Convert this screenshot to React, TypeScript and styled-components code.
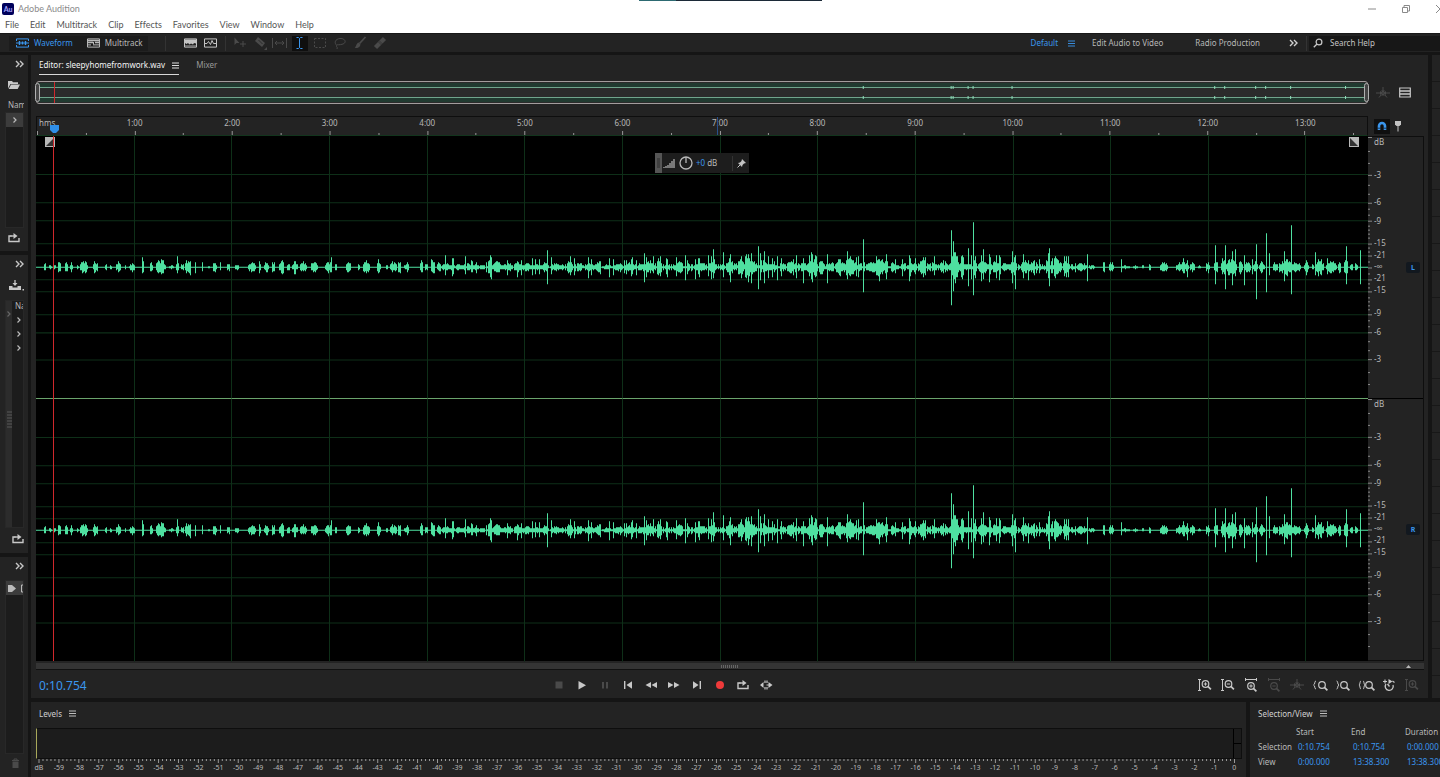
import React from "react";
import styled, { createGlobalStyle } from "styled-components";

const c = {
  panel: "#232323",
  inset: "#1c1c1c",
  gap: "#151515",
  line: "#0e0e0e",
  text: "#b8b8b8",
  dim: "#4a4a4a",
  blue: "#3a96ee",
  wave: "#4ee0a0",
  grid: "#0e2f18",
};

const Global = createGlobalStyle`
  *, *::before, *::after { box-sizing: border-box; }
  html, body { margin: 0; background: ${c.gap}; }
  body { font: 8px/12px "Noto Sans", sans-serif; font-variant-ligatures: none; color: ${c.text}; overflow-x: hidden; }
  button, input { font: inherit; font-variant-ligatures: none; color: inherit; background: none; border: 0; padding: 0; margin: 0; }
  svg { display: block; }
`;

const App_ = styled.div`
  display: flex;
  flex-direction: column;
  min-height: 100vh;
  overflow: hidden;
`;

/* ---------- window chrome ---------- */
const TitleBar = styled.header`
  position: relative;
  display: flex;
  align-items: center;
  height: 17px;
  padding-left: 2px;
  background: #fff;
  color: #8a8a8a;
  font: 9px/12px Lato, sans-serif;
`;
const Title = styled.h1`
  flex: 1;
  margin: 0;
  padding-left: 4px;
  font-size: 9px;
  font-weight: 400;
`;
const AppBadge = styled.span`
  width: 12px;
  height: 12px;
  border-radius: 2px;
  background: #00005b;
  color: #a9a9ff;
  font-size: 7px;
  font-weight: 700;
  text-align: center;
`;
const TopStrip = styled.span`
  position: absolute;
  top: 0;
  left: 44.4%;
  width: 183px;
  height: 1px;
  background: linear-gradient(90deg, #2d6a72 20%, #1c2a38 20%);
`;
const WindowButtons = styled.div`
  display: flex;
  gap: 22px;
  margin-right: -6px;
`;
const MenuBar = styled.nav`
  display: flex;
  align-items: center;
  gap: 11px;
  height: 16px;
  padding-left: 5px;
  background: #fff;
  color: #555;
  font: 9px/12px Lato, sans-serif;
`;
const MenuItem = styled.button`
  line-height: 14px;
`;

/* ---------- toolbar ---------- */
const Toolbar = styled.div`
  display: flex;
  align-items: center;
  height: 19px;
  background: ${c.panel};
  border-top: 1px solid #181818;
`;
const Modes = styled.div`
  display: flex;
  align-items: center;
  gap: 14px;
  height: 15px;
  margin-left: 9px;
  padding: 0 5px 0 7px;
  background: ${c.inset};
`;
const Mode = styled.button<{ $on?: boolean }>`
  display: flex;
  align-items: center;
  gap: 5px;
  color: ${(p) => (p.$on ? c.blue : c.text)};
`;
const Divider = styled.span<{ $gap?: number }>`
  width: 1px;
  height: 15px;
  margin: 0 ${(p) => p.$gap ?? 0}px;
  background: #333;
`;
const Tools = styled.div`
  display: flex;
  align-items: center;
  gap: 4px;
`;
const Tool = styled.button<{ $on?: boolean; $dim?: boolean }>`
  display: grid;
  place-items: center;
  width: 16px;
  height: 15px;
  background: ${(p) => (p.$on ? "#0f0f0f" : "none")};
  color: ${(p) => (p.$on ? c.blue : p.$dim ? c.dim : "#c4c4c4")};
`;
const Workspaces = styled.div`
  display: flex;
  align-items: center;
  margin-left: auto;
`;
const Workspace = styled.button<{ $on?: boolean; $after: number }>`
  display: flex;
  align-items: center;
  gap: 10px;
  margin-right: ${(p) => p.$after}px;
  color: ${(p) => (p.$on ? c.blue : c.text)};
`;
const MoreWorkspaces = styled.button`
  margin-right: 6px;
  color: #d0d0d0;
`;
const Search = styled.label`
  display: flex;
  align-items: center;
  gap: 7px;
  width: 131px;
  height: 15px;
  padding-left: 4px;
  background: #171717;
  color: #c8c8c8;
`;
const SearchInput = styled.input`
  width: 100px;
  outline: 0;
  &::placeholder { color: #c4c4c4; opacity: 1; }
`;

/* ---------- docking ---------- */
const Dock = styled.main`
  flex: 1;
  display: flex;
  gap: 3px;
  padding-top: 3px;
  background: ${c.gap};
`;
const SideRail = styled.aside`
  display: flex;
  flex-direction: column;
  gap: 4px;
  width: 28px;
`;
const SidePanel = styled.section<{ $h?: number }>`
  display: flex;
  flex-direction: column;
  flex: ${(p) => (p.$h ? `0 0 ${p.$h}px` : "1")};
  padding: 3px 4px 5px 5px;
  background: ${c.panel};
  overflow: hidden;
`;
const RailButton = styled.button<{ $dim?: boolean; $h?: number; $end?: number }>`
  display: flex;
  flex: none;
  align-items: center;
  justify-content: flex-end;
  height: ${(p) => p.$h ?? 12}px;
  padding-right: ${(p) => p.$end ?? 0}px;
  color: ${(p) => (p.$dim ? c.dim : "#c8c8c8")};
`;
const RailList = styled.div<{ $top?: number }>`
  flex: 1;
  display: flex;
  margin-top: ${(p) => p.$top ?? 0}px;
  overflow: hidden;
  background: ${c.inset};
  border: 1px solid #282828;
`;
const RailGrip = styled.div`
  display: flex;
  flex-direction: column;
  align-items: center;
  justify-content: space-between;
  width: 6px;
  padding: 9px 0 98px;
  background: #2c2c2c;
  color: #666;
`;
const RailRows = styled.div`
  flex: 1;
  display: flex;
  flex-direction: column;
  align-items: flex-end;
  white-space: nowrap;
`;
const RailRow = styled.span<{ $on?: boolean }>`
  display: flex;
  flex: none;
  align-items: center;
  justify-content: center;
  width: 100%;
  height: 14px;
  background: ${(p) => (p.$on ? "#3c3c3c" : "none")};
  color: #bbb;
  overflow: hidden;
`;
const RailHead = styled.span`
  height: 12px;
  padding-left: 3px;
  line-height: 10px;
  white-space: nowrap;
  overflow: hidden;
`;
const Work = styled.div`
  flex: 1;
  min-width: 0;
  display: flex;
  flex-direction: column;
  gap: 4px;
`;
const Upper = styled.div`
  flex: 1;
  display: flex;
  gap: 4px;
`;
const Sliver = styled.aside`
  width: 8px;
  background: repeating-linear-gradient(${c.panel} 0 26px, #181818 26px 27px);
`;
const Lower = styled.div`
  display: flex;
  gap: 4px;
  height: 75px;
`;

/* ---------- editor ---------- */
const Editor = styled.section`
  flex: 1;
  min-width: 0;
  display: flex;
  flex-direction: column;
  padding: 0 4px 0 5px;
  background: ${c.panel};
`;
const Tabs = styled.div`
  display: flex;
  align-items: center;
  gap: 17px;
  height: 21px;
  margin-bottom: 5px;
  padding-left: 3px;
`;
const Tab = styled.button<{ $on?: boolean }>`
  display: flex;
  align-items: center;
  gap: 7px;
  height: 18px;
  color: ${(p) => (p.$on ? "#f4f4f4" : "#999")};
  border-bottom: 1px solid ${(p) => (p.$on ? "#d8d8d8" : "transparent")};
`;
const Split = styled.div<{ $mb?: number; $grow?: boolean }>`
  display: grid;
  grid-template-columns: minmax(0, 1fr) 56px;
  flex: ${(p) => (p.$grow ? "1" : "none")};
  margin-bottom: ${(p) => p.$mb ?? 0}px;
`;
const Overview = styled.div`
  position: relative;
  height: 23px;
  border: 1px solid #a39d9d;
  border-radius: 3px;
  background: #2b2b2b;
`;
const Handle = styled.span<{ $side: "left" | "right" }>`
  position: absolute;
  top: 1px;
  bottom: 1px;
  ${(p) => p.$side}: -2px;
  width: 5px;
  border: 1px solid #b0b0b0;
  border-radius: 3px;
  background: #444;
`;
const SideIcons = styled.div<{ $gap: number }>`
  display: flex;
  align-items: center;
  gap: ${(p) => p.$gap}px;
  padding-left: 6px;
`;
const Ruler = styled.div`
  position: relative;
  display: flex;
  flex-direction: column;
  justify-content: space-between;
  height: 20px;
  border: 1px solid ${c.line};
  border-bottom-color: #12351d;
`;
const RulerLabels = styled.div`
  display: flex;
`;
const RulerLabel = styled.span<{ $span: number; $start?: boolean }>`
  flex: ${(p) => p.$span} 1 0;
  min-width: 0;
  text-indent: ${(p) => (p.$start ? 2 : 0)}px;
  text-align: ${(p) => (p.$start ? "left" : "center")};
`;
const Stretch = styled.svg`
  width: 100%;
  height: 100%;
`;
const RulerTicks = styled.svg`
  width: 100%;
  height: 5px;
`;
const HeadMark = styled.svg`
  position: absolute;
  left: 1%;
  bottom: 1px;
  width: 9px;
  height: 9px;
`;
const HeadLine = styled.span`
  position: absolute;
  z-index: 1;
  top: 0;
  bottom: 0;
  left: 1.28%;
  width: 1px;
  background: #d0282c;
`;
const HoverLine = styled.span`
  position: absolute;
  top: 0;
  bottom: 0;
  left: 51.1%;
  width: 1px;
  background: #28508a;
`;
const Lanes = styled.div`
  position: relative;
  display: flex;
  flex-direction: column;
  background: #000;
`;
const Lane = styled.div`
  flex: 1 1 0;
  min-height: 180px;
  & + & { border-top: 1px solid #6aa46c; }
  svg { position: absolute; width: 100%; height: 50%; }
`;
const Corner = styled.svg<{ $side: "left" | "right" }>`
  position: absolute;
  top: 1px;
  ${(p) => p.$side}: 9px;
  width: 10px;
  height: 10px;
`;
const Hud = styled.div`
  position: absolute;
  top: 17px;
  left: 50%;
  transform: translateX(-50%);
  display: flex;
  align-items: center;
  width: 94px;
  height: 20px;
  background: #1d1d1d;
`;
const HudGrip = styled.span`
  display: grid;
  place-items: center;
  width: 7px;
  height: 20px;
  margin-right: 1px;
  background: #555;
`;
const HudGain = styled.span`
  display: flex;
  gap: 2px;
  flex: 1;
  padding-left: 2px;
`;
const Blue = styled.button`
  color: ${c.blue};
`;
const Scales = styled.div`
  display: flex;
  flex-direction: column;
  border: 1px solid ${c.line};
  border-left: 0;
`;
const Scale = styled.div`
  flex: 1 1 0;
  min-height: 0;
  display: grid;
  grid-template-columns: 5px 1fr 17px;
  grid-template-rows: minmax(0, 1fr);
  align-items: center;
  & + & { border-top: 1px solid #000; }
`;
const rowHeights = [11, 33, 27, 19, 22, 12, 12, 12, 12, 23, 19, 27, 33];
const ScaleLabels = styled.div`
  display: grid;
  height: 100%;
  grid-template-rows: ${rowHeights.map((h) => `minmax(0, ${h}fr)`).join(" ")};
  align-items: end;
  line-height: 12px;
  span { height: 12px; padding-left: 1px; }
`;
const Channel = styled.button`
  display: grid;
  place-items: center;
  width: 14px;
  height: 11px;
  border-radius: 2px;
  background: #12181f;
  color: ${c.blue};
  font-size: 7px;
  font-weight: 700;
  line-height: 11px;
`;
const ScrollTrack = styled.div`
  display: grid;
  grid-template-columns: 1fr 18px 1fr;
  align-items: center;
  height: 7px;
  margin-top: 2px;
  background: #343434;
  border-bottom: 1px solid #111;
  svg { justify-self: end; margin-right: 13px; }
`;
const Grip = styled.span`
  grid-column: 2;
  height: 3px;
  background: repeating-linear-gradient(90deg, #666 0 1px, transparent 1px 2px);
`;
const Transport = styled.div`
  display: flex;
  align-items: center;
  justify-content: space-between;
  height: 28px;
  padding: 1px 3px 0 3px;
`;
const Clock = styled.button`
  min-width: 90px;
  padding-top: 2px;
  color: ${c.blue};
  font-size: 12px;
  line-height: 16px;
  text-align: left;
`;
const ButtonRow = styled.div`
  display: flex;
  gap: 5px;
`;
const IconButton = styled.button<{ $dim?: boolean }>`
  display: grid;
  place-items: center;
  width: 18px;
  height: 18px;
  color: ${(p) => (p.$dim ? c.dim : "#c8c8c8")};
`;

/* ---------- lower panels ---------- */
const Levels = styled.section`
  flex: 1;
  min-width: 0;
  padding: 5px 4px 0 5px;
  background: ${c.panel};
  overflow: hidden;
`;
const PanelTitle = styled.h2`
  display: flex;
  align-items: center;
  gap: 7px;
  height: 13px;
  margin: 0 0 8px;
  padding-left: 3px;
  color: #d0d0d0;
  font-size: 8px;
  font-weight: 400;
`;
const Meter = styled.div`
  display: flex;
  justify-content: space-between;
  height: 31px;
  background: ${c.inset};
  border: 1px solid ${c.line};
  border-left: 1px solid #a8a85a;
`;
const Clip = styled.span`
  width: 8px;
  border-left: 1px solid #000;
  background: linear-gradient(transparent 14px, #000 14px 15px, transparent 15px);
`;
const MeterTicks = styled.svg`
  width: 100%;
  height: 4px;
`;
const MeterLabels = styled.div`
  display: flex;
  margin: 0 -2px 0 -7px;
  font-size: 7px;
  line-height: 10px;
  span { flex: 1 1 0; min-width: 0; text-align: center; }
`;
const Selection = styled.section`
  width: 190px;
  padding: 5px 0 0 5px;
  background: ${c.panel};
  overflow: hidden;
`;
const Times = styled.table`
  width: 188px;
  margin-top: -4px;
  border-spacing: 0;
  table-layout: fixed;
  th, td {
    height: 15px;
    padding: 0 0 0 3px;
    font-weight: 400;
    text-align: left;
    white-space: nowrap;
  }
  thead th:not(:first-child) { padding-left: 1px; }
`;

/* ---------- icons ---------- */
type IconProps = { children: React.ReactNode; w?: number; h?: number };
const Icon = ({ children, w = 14, h = 14 }: IconProps) => (
  <svg width={w} height={h} viewBox={`0 0 ${w} ${h}`} fill="none" stroke="currentColor" aria-hidden="true">
    {children}
  </svg>
);
const solid = { fill: "currentColor", stroke: "none" };

const Burger = () => (
  <Icon w={7} h={7}><path d="M0 1h7M0 3.500h7M0 6h7" strokeWidth=".9" /></Icon>
);
const Chevrons = () => (
  <Icon w={9} h={8}><path d="M1 1l3 3-3 3M5 1l3 3-3 3" strokeWidth="1.4" /></Icon>
);
const Chevron = () => (
  <Icon w={6} h={8}><path d="M1.500 1.500l2.500 2.500-2.500 2.500" strokeWidth="1.200" /></Icon>
);
const WaveIcon = () => (
  <Icon w={13} h={10}>
    <path d="M.5 3V.9h12V3M.5 7v2.100h12V7M0 5h13" />
    <path d="M3.500 3v4M6.500 3.500v3M9.500 3v4" strokeWidth="1.400" />
  </Icon>
);
const TracksIcon = () => (
  <Icon w={13} h={10}>
    <path d="M.5.9h12v8.200H.5z" />
    <path d="M1 2.500h11M1 4.500h5M8 4.500h4" strokeWidth="1.300" />
    <path d="M1 6.900h3M6 6.900h6M6.500 4v2.500" />
  </Icon>
);
const SpectralIcon = () => (
  <Icon w={13} h={10}>
    <path d="M.5.9h12v8.200H.5z" />
    <path d="M1 1.500h11v4l-2-.5-1 1.500-2-1-1.500 1L4 5 2.500 6 1 5z" {...solid} />
    <path d="M1 7.800h11" strokeWidth=".6" />
  </Icon>
);
const PitchIcon = () => (
  <Icon w={13} h={10}>
    <path d="M.5.9h12v8.200H.5z" /><path d="M1 5.500h2l1.500-2 2 3 1.500-4 1.500 3H12" />
  </Icon>
);
const MoveIcon = () => (
  <Icon><path d="M1.500 1.500v7.500l2-2h3z" {...solid} /><path d="M7 8h6M10 5v6" /></Icon>
);
const RazorIcon = () => (
  <Icon><path d="M5 1l7 6-3 4-7-6z" {...solid} /><path d="M5.500 4l4 4" stroke="#232323" strokeWidth=".8" /><path d="M14 11v3h-3z" {...solid} /></Icon>
);
const SlipIcon = () => (
  <Icon w={15}><path d="M.5 2v10M14.500 2v10M3 7h9M5 5L3 7l2 2M10 5l2 2-2 2" /></Icon>
);
const IBeamIcon = () => (
  <Icon w={9}><path d="M1.500 1.500h2l1 1 1-1h2M1.500 12.500h2l1-1 1 1h2M4.500 2.500v9" /></Icon>
);
const MarqueeIcon = () => (
  <Icon><path d="M1.500 2.500h11v9h-11z" strokeDasharray="2 1.500" /></Icon>
);
const LassoIcon = () => (
  <Icon><path d="M3.500 9C1 7 2 3 7 2.500s7 4 3 5.500-6 0-6.500 1.500S5 11 4 13" /></Icon>
);
const BrushIcon = () => (
  <Icon><path d="M12.500 1L6.500 7.500" strokeWidth="1.800" /><path d="M7.500 8.500c-.5 3-3.500 4-6 3.500 1.500-.5 1.500-4.500 4-5.500z" {...solid} /></Icon>
);
const HealIcon = () => (
  <Icon><path d="M2.500 11.500l9-9" strokeWidth="4.500" /><path d="M5.500 6l3 3M6.500 5l3 3" stroke="#232323" strokeWidth=".6" /></Icon>
);
const SearchIcon = () => (
  <Icon w={10} h={10}><circle cx="6" cy="4" r="2.900" strokeWidth="1.200" /><path d="M4 6L.8 9.200" strokeWidth="1.300" /></Icon>
);
const FolderIcon = () => (
  <Icon w={12} h={10}>
    <path d="M0 1h4l1 1.200h5V4H2.500L0 8.500z" {...solid} /><path d="M3 4.600h9L9.700 9H.7z" {...solid} />
  </Icon>
);
const LoopIcon = () => (
  <Icon w={12} h={11}>
    <path d="M3.500 4H1v5.500h10V6" strokeWidth="1.400" /><path d="M2.500 4H7" strokeWidth="1.400" /><path d="M5.500 1l4 3-4 3z" {...solid} />
  </Icon>
);
const ImportIcon = () => (
  <Icon w={15} h={11}>
    <path d="M0 6h3.500v1.500h5V6H12v4H0z" {...solid} /><path d="M6 0v4" strokeWidth="1.300" />
    <path d="M3.500 3h5L6 6zM13.500 9h1.500v1.500h-1.500z" {...solid} />
  </Icon>
);
const TrashIcon = () => (
  <Icon w={9} h={10}><path d="M1 2.500h7M3 2V1h3v1" /><path d="M1.500 3.500h6V10h-6z" {...solid} /></Icon>
);
const SnapStarIcon = () => (
  <Icon>
    <path d="M0 7h4M10 7h4M7 1v4M5.300 8.700L3 11.500M8.700 8.700L11 11.500" />
    <path d="M4 5l3 2-3 2zM10 5L7 7l3 2zM5 4.500h4L7 7zM5 9.500h4L7 7z" {...solid} />
  </Icon>
);
const ListIcon = () => (
  <Icon w={12} h={11}><path d="M.7 1h10.600v9H.7z" strokeWidth="1.200" /><path d="M1 4h10M1 7h10" strokeWidth="1.400" /></Icon>
);
const MagnetIcon = () => (
  <Icon w={10} h={10}>
    <path d="M2 9V5a3 3 0 016 0v4" strokeWidth="2.600" /><path d="M.5 7.200h3M6.500 7.200h3" stroke="#111" strokeWidth=".7" />
  </Icon>
);
const MarkerIcon = () => (
  <Icon w={8} h={12}><path d="M1 1h6v3.500L5.500 6h-3L1 4.500z" {...solid} /><path d="M4 5v6.500" /></Icon>
);
const PinIcon = () => (
  <Icon w={9} h={9}><path d="M5 0l4 4-2 .5-1.500 1.500L5 8 1 4l2-.5L4.500 2z" {...solid} /><path d="M3.500 5.500L.5 8.500" /></Icon>
);

const Lens = ({ x, sign }: { x: number; sign?: "+" | "-" }) => (
  <>
    <circle cx={x} cy="6" r="3.300" strokeWidth="1.200" />
    <path d={`M${x + 2.400} 8.400l3 3`} strokeWidth="1.700" />
    {sign && <path d={`M${x - 1.700} 6h3.400`} />}
    {sign === "+" && <path d={`M${x} 4.300v3.400`} />}
  </>
);
const VBracket = () => <path d="M0 1.500h3M0 12.500h3M1.500 1.500v11" />;
const HBracket = () => <path d="M1 1.500h12M1.500 0v3M12.500 0v3" />;

const transport: [string, React.ReactNode, boolean?][] = [
  ["Stop", <Icon><path d="M3.500 3.500h7v7h-7z" {...solid} /></Icon>, true],
  ["Play", <Icon><path d="M3.500 3v8.500L11 7.200z" {...solid} /></Icon>],
  ["Pause", <Icon><path d="M4 4v6.500h2V4zM8 4v6.500h2V4z" {...solid} /></Icon>, true],
  ["Go to start", <Icon><path d="M3 3h1.400v8H3zM11 3.200v7.600L5.500 7z" {...solid} /></Icon>],
  ["Rewind", <Icon><path d="M7 4v6L1.500 7zM13 4v6L7.500 7z" {...solid} /></Icon>],
  ["Fast forward", <Icon><path d="M1 4v6l5.500-3zM7 4v6l5.500-3z" {...solid} /></Icon>],
  ["Go to end", <Icon><path d="M9.600 3H11v8H9.600zM3 3.200v7.600L8.500 7z" {...solid} /></Icon>],
  ["Record", <Icon><circle cx="7" cy="7" r="4" fill="#ee3a3a" stroke="none" /></Icon>],
  ["Loop playback", <LoopIcon />],
  ["Skip selection", (
    <Icon>
      <path d="M4.500 4v6L1 7zM9.500 4l4 3-4 3z" {...solid} />
      <path d="M6 2.500v2.500M6 9v2.500M8 2.500v2.500M8 9v2.500M7.500 7h3" strokeWidth="1.200" />
    </Icon>
  )],
];
const zooms: [string, React.ReactNode, boolean?][] = [
  ["Zoom in amplitude", <Icon><VBracket /><Lens x={7.500} sign="+" /></Icon>],
  ["Zoom out amplitude", <Icon><VBracket /><Lens x={7.500} sign="-" /></Icon>],
  ["Zoom in time", <Icon><HBracket /><g transform="translate(0 2)"><Lens x={7} sign="+" /></g></Icon>],
  ["Zoom out time", <Icon><HBracket /><g transform="translate(0 2)"><Lens x={7} sign="-" /></g></Icon>, true],
  ["Zoom out full", <SnapStarIcon />, true],
  ["Zoom to in point", <Icon w={16}><path d="M4 3C2 3 3.500 6.500 1.500 7 3.500 7.500 2 11 4 11" /><g transform="translate(0 1)"><Lens x={10} /></g></Icon>],
  ["Zoom to out point", <Icon w={16}><path d="M1.500 3c2 0 .5 3.500 2.500 4-2 .5-.5 4-2.500 4" /><g transform="translate(0 1)"><Lens x={9} /></g></Icon>],
  ["Zoom to selection", <Icon w={17}><path d="M3 3C1.500 3 2.500 6.500 1 7c1.500.5.5 4 2 4M5 3c1.500 0 .5 3.500 2 4-1.500.5-.5 4-2 4" /><g transform="translate(0 1)"><Lens x={11} /></g></Icon>],
  ["Zoom reset", <Icon><path d="M4 6a4 4 0 107 1M7.500 8.500L5.500 6" strokeWidth="1.300" /><path d="M1 3.500h4M3 1.500v4M10.500 3l2 1.500" strokeWidth="1.100" /><path d="M6.500 1l4 2.500-4 2.500z" {...solid} /></Icon>],
  ["Zoom track height", <Icon><VBracket /><Lens x={7.500} sign="+" /></Icon>, true],
];

/* ---------- waveform ---------- */
// Silence between phrases is left flat; each burst is [start, end, peak].
const bursts: number[][] = [
  [8, 9, 6], [13, 15, 2], [18, 19, 3], [22, 24, 7], [29, 31, 6], [34, 36, 6], [41, 42, 2], [44, 51, 6], [57, 61, 6], [69, 70, 3],
  [74, 75, 2], [80, 84, 6], [89, 89, 3], [93, 98, 4], [106, 107, 8], [114, 116, 5], [120, 129, 8], [133, 137, 2], [140, 142, 6],
  [145, 147, 4], [149, 154, 8], [159, 159, 5], [166, 166, 5], [172, 173, 2], [177, 180, 6], [184, 184, 5], [191, 193, 4],
  [199, 202, 3], [212, 219, 5], [223, 224, 6], [228, 232, 5], [236, 238, 6], [243, 247, 7], [251, 253, 4], [256, 261, 6],
  [264, 270, 6], [275, 281, 6], [289, 295, 6], [299, 300, 4], [310, 314, 6], [322, 323, 4], [327, 333, 7], [341, 344, 6],
  [350, 351, 4], [354, 360, 6], [362, 364, 6], [368, 372, 5], [384, 386, 6], [389, 391, 4], [395, 398, 7], [401, 404, 5],
  [404, 426, 6], [427, 448, 5], [450, 476, 8], [478, 505, 6], [506, 512, 6], [514, 536, 8], [537, 564, 7], [566, 576, 3],
  [576, 602, 7], [603, 624, 9], [625, 662, 7], [663, 690, 8], [690, 714, 10], [714, 730, 12], [730, 759, 7], [759, 777, 11],
  [778, 798, 9], [799, 808, 8], [809, 819, 11], [820, 838, 8], [839, 848, 9], [849, 868, 6], [869, 898, 9], [899, 913, 10],
  [914, 922, 15], [923, 946, 9], [946, 964, 10], [965, 974, 5], [974, 980, 10], [982, 1009, 9], [1010, 1024, 13],
  [1025, 1039, 9], [1040, 1051, 5], [1053, 1058, 3], [1067, 1068, 5], [1073, 1077, 6], [1086, 1093, 2], [1097, 1101, 2],
  [1106, 1107, 2], [1113, 1114, 3], [1124, 1131, 5], [1140, 1152, 5], [1154, 1158, 5], [1162, 1164, 2], [1170, 1173, 5],
  [1178, 1181, 6], [1185, 1189, 10], [1190, 1200, 8], [1203, 1206, 8], [1208, 1214, 7], [1217, 1221, 6], [1223, 1228, 6],
  [1237, 1241, 5], [1243, 1247, 6], [1248, 1254, 9], [1256, 1264, 5], [1268, 1272, 6], [1276, 1277, 3], [1280, 1287, 8],
  [1290, 1300, 6], [1302, 1304, 5], [1308, 1311, 8], [1314, 1316, 3], [1319, 1321, 5],
];
// Isolated transients: [x, above, below].
const spikes: number[][] = [
  [106, 10, 6], [141, 11, 6], [154, 6, 8], [295, 10, 5], [342, 8, 6], [395, 8, 4], [409, 12, 8], [429, 11, 7], [455, 10, 12],
  [481, 6, 10], [511, 17, 17], [534, 11, 8], [573, 9, 10], [608, 14, 15], [617, 11, 6], [631, 8, 10], [649, 12, 13],
  [659, 8, 12], [677, 18, 11], [687, 15, 10], [709, 11, 10], [722, 21, 22], [732, 11, 11], [741, 11, 13], [757, 8, 8],
  [767, 9, 16], [775, 15, 12], [791, 11, 6], [811, 16, 12], [827, 28, 25], [840, 11, 8], [843, 8, 14], [850, 13, 12],
  [866, 8, 9], [889, 10, 8], [915, 37, 38], [917, 26, 24], [932, 19, 19], [937, 45, 28], [947, 18, 12], [960, 12, 6],
  [976, 16, 16], [979, 12, 22], [992, 7, 13], [1013, 19, 19], [1018, 9, 9], [1030, 11, 10], [1032, 11, 10], [1051, 13, 14],
  [1067, 5, 4], [1085, 8, 5], [1147, 9, 6], [1151, 7, 10], [1179, 22, 17], [1189, 22, 22], [1196, 16, 18], [1199, 18, 9],
  [1208, 12, 18], [1216, 8, 7], [1220, 23, 32], [1230, 34, 25], [1233, 14, 8], [1248, 16, 14], [1255, 42, 27], [1279, 15, 8],
  [1291, 9, 7], [1310, 21, 17], [1324, 17, 17],
];
const wavePath = (() => {
  let seed = 11;
  const rnd = () => (seed = (seed * 16807) % 2147483647) / 2147483647;
  let d = "M0 131H1332";
  bursts.forEach(([a, b, h]) => {
    const dense = b - a > 12;
    for (let x = a; x <= b; x++) {
      const hump = Math.sin((Math.PI * (x - a + 1)) / (b - a + 2));
      let k = (0.3 + 0.7 * hump) * (0.5 + 0.6 * rnd());
      if (dense) {
        const swell = Math.abs(Math.sin(x * 0.31) * Math.cos(x * 0.117));
        k = (0.38 + 0.5 * swell) * (0.55 + 0.45 * rnd());
        if (rnd() > 0.86) k = 0.9 + 0.6 * rnd();
        else if (rnd() > 0.86) k = 0.15;
      }
      const up = Math.max(1, Math.round(h * k));
      const down = Math.max(1, Math.round(h * k * (0.7 + 0.5 * rnd())));
      d += `M${x + 0.5} ${131 - up}V${131 + down}`;
    }
  });
  return d;
})();
const spikePath = spikes.map(([x, u, l]) => `M${x + 0.5} ${131 - u}V${131 + l}`).join("");

const levelRows = [38, 66, 84, 107, 119, 143, 155, 178, 196, 223];
const minutes = Array.from({ length: 13 }, (_, i) => i + 1);
const MIN = 97.65;
const gridPath =
  levelRows.map((y) => `M0 ${y + 0.5}H1332`).join("") +
  minutes.map((m) => `M${Math.round(m * MIN) + 0.5} 0V262`).join("");
const rulerPath = Array.from({ length: 28 }, (_, i) => `M${Math.round((i * MIN) / 2) + 0.5} ${i % 2 ? 3 : 1}V5`).join("");
const scaleTicks = [0, 14, 26, 38, 48, 57, 66, 72, 78, 84, 89, 93, 97, 101, 107, 111, 115, 119, 125, 131, 137, 143, 147, 151, 155,
  161, 165, 169, 173, 178, 184, 190, 196, 205, 214, 223, 236, 248];
const scalePath = scaleTicks
  .map((y) => `M0 ${y + 0.5}H${levelRows.includes(y) || y === 131 || y === 0 ? 4 : 2}`)
  .join("");
const dbLabels = ["dB", "-3", "-6", "-9", "-15", "-21", "-∞", "-21", "-15", "-9", "-6", "-3"];
const overviewSpikes = [827, 915, 917, 932, 937, 976, 1179, 1189, 1220, 1230, 1255, 1310];
const meterPath = Array.from({ length: 301 }, (_, i) => `M${3 + i * 3.985} 0V${i % 5 ? 2 : 4}`).join("");

const tools: [string, React.ReactNode][] = [
  ["Move", <MoveIcon />], ["Razor", <RazorIcon />], ["Slip", <SlipIcon />], ["Time selection", <IBeamIcon />],
  ["Marquee", <MarqueeIcon />], ["Lasso", <LassoIcon />], ["Paintbrush", <BrushIcon />], ["Spot healing", <HealIcon />],
];

const times = [
  ["Selection", "0:10.754", "0:10.754", "0:00.000"],
  ["View", "0:00.000", "13:38.300", "13:38.300"],
];

export default function App() {
  return (
    <App_>
      <Global />
      <TitleBar>
        <TopStrip />
        <AppBadge>Au</AppBadge>
        <Title>Adobe Audition</Title>
        <WindowButtons>
          <button aria-label="Minimize"><Icon w={12} h={10}><path d="M2 5h8" /></Icon></button>
          <button aria-label="Restore"><Icon w={12} h={10}><path d="M2.500 3.500h5v5h-5zM4 3.500v-2h5.500V7H7.500" /></Icon></button>
          <button aria-label="Close"><Icon w={12} h={10}><path d="M2 1l8 8M10 1L2 9" /></Icon></button>
        </WindowButtons>
      </TitleBar>
      <MenuBar>
        {["File", "Edit", "Multitrack", "Clip", "Effects", "Favorites", "View", "Window", "Help"].map((m) => (
          <MenuItem key={m}>{m}</MenuItem>
        ))}
      </MenuBar>

      <Toolbar>
        <Modes>
          <Mode $on><WaveIcon />Waveform</Mode>
          <Mode><TracksIcon />Multitrack</Mode>
        </Modes>
        <Divider $gap={17} />
        <Tools>
          <Tool aria-label="Spectral frequency display"><SpectralIcon /></Tool>
          <Tool aria-label="Spectral pitch display"><PitchIcon /></Tool>
        </Tools>
        <Divider $gap={6} />
        <Tools>
          {tools.map(([name, icon]) => (
            <Tool key={name} aria-label={name} $on={name === "Time selection"} $dim>{icon}</Tool>
          ))}
        </Tools>
        <Workspaces>
          <Workspace $on $after={17}>Default<Burger /></Workspace>
          <Workspace $after={32}>Edit Audio to Video</Workspace>
          <Workspace $after={29}>Radio Production</Workspace>
          <MoreWorkspaces aria-label="More workspaces"><Chevrons /></MoreWorkspaces>
          <Divider $gap={2} />
        </Workspaces>
        <Search>
          <SearchIcon />
          <SearchInput aria-label="Search Help" placeholder="Search Help" />
        </Search>
      </Toolbar>

      <Dock>
        <SideRail>
          <SidePanel $h={196}>
            <RailButton aria-label="Expand files" $end={-1}><Chevrons /></RailButton>
            <RailButton $h={30} $end={4} aria-label="Open file"><FolderIcon /></RailButton>
            <RailHead>Name</RailHead>
            <RailList><RailRows><RailRow $on><Chevron /></RailRow></RailRows></RailList>
            <RailButton $h={18} $end={4} aria-label="Loop preview"><LoopIcon /></RailButton>
          </SidePanel>
          <SidePanel $h={298}>
            <RailButton aria-label="Expand media browser"><Chevrons /></RailButton>
            <RailButton $h={30} aria-label="Import"><ImportIcon /></RailButton>
            <RailList>
              <RailGrip><Chevron /><Icon w={5} h={18}><path d="M0 1h5M0 4h5M0 7h5M0 10h5M0 13h5M0 16h5" strokeWidth=".8" /></Icon></RailGrip>
              <RailRows>
                <RailHead>Na</RailHead>
                <RailRow><Chevron /></RailRow><RailRow><Chevron /></RailRow><RailRow><Chevron /></RailRow>
              </RailRows>
            </RailList>
            <RailButton $h={20} aria-label="Loop media preview"><LoopIcon /></RailButton>
          </SidePanel>
          <SidePanel>
            <RailButton aria-label="Expand history"><Chevrons /></RailButton>
            <RailList $top={8}>
              <RailRows>
                <RailRow $on><Icon w={16} h={9}><path d="M1 1h4l4 3.500L5 8H1z" {...solid} /><path d="M16 1h-1.500v7H16" /></Icon></RailRow>
              </RailRows>
            </RailList>
            <RailButton $dim $h={18} $end={4} aria-label="Delete"><TrashIcon /></RailButton>
          </SidePanel>
        </SideRail>

        <Work>
          <Upper>
            <Editor>
              <Tabs>
                <Tab $on>Editor: sleepyhomefromwork.wav<Burger /></Tab>
                <Tab>Mixer</Tab>
              </Tabs>
              <Split $mb={12}>
                <Overview>
                  <Stretch viewBox="0 0 1332 21" preserveAspectRatio="none">
                    <path d="M0 1h1332v5H0zM0 15h1332v5H0z" fill="#213a30" />
                    <path d="M0 5.500H1332M0 15.500H1332" stroke="#6fa68d" />
                    <path d={overviewSpikes.map((x) => `M${x + 0.5} 4V7M${x + 0.5} 14V17`).join("")} stroke="#8fe0bb" />
                  </Stretch>
                  <HeadLine />
                  <Handle $side="left" />
                  <Handle $side="right" />
                </Overview>
                <SideIcons $gap={4}>
                  <IconButton $dim aria-label="Zoom out full"><SnapStarIcon /></IconButton>
                  <IconButton aria-label="View options"><ListIcon /></IconButton>
                </SideIcons>
              </Split>
              <Split>
                <Ruler>
                  <RulerLabels>
                    <RulerLabel $span={30} $start>hms</RulerLabel>
                    {minutes.map((m) => <RulerLabel key={m} $span={60}>{m}:00</RulerLabel>)}
                    <RulerLabel $span={8} />
                  </RulerLabels>
                  <RulerTicks viewBox="0 0 1332 5" preserveAspectRatio="none">
                    <path d={rulerPath} stroke="#9a9a9a" />
                  </RulerTicks>
                  <HoverLine />
                  <HeadMark viewBox="0 0 9 9"><path d="M0 0h9v5L6 8H3L0 5z" fill="#2f8fe8" /></HeadMark>
                </Ruler>
                <SideIcons $gap={0}>
                  <Tool $on aria-label="Snap"><MagnetIcon /></Tool>
                  <Tool aria-label="Add marker"><MarkerIcon /></Tool>
                </SideIcons>
              </Split>
              <Split $grow>
                <Lanes>
                  {["left", "right"].map((ch) => (
                    <Lane key={ch}>
                      <svg viewBox="0 0 1332 262" preserveAspectRatio="none" fill="none">
                        <path d={gridPath} stroke={c.grid} />
                        <path d={wavePath} stroke={c.wave} />
                        <path d={spikePath} stroke={c.wave} />
                      </svg>
                    </Lane>
                  ))}
                  <HeadLine />
                  <Corner $side="left" viewBox="0 0 10 10"><path d="M0 0h10v10H0z" fill="#b8b8b8" /><path d="M9 1v8H1z" fill="#333" /></Corner>
                  <Corner $side="right" viewBox="0 0 10 10"><path d="M0 0h10v10H0z" fill="#b8b8b8" /><path d="M1 1v8h8z" fill="#333" /></Corner>
                  <Hud>
                    <HudGrip><Icon w={3} h={10}><path d="M0 1h3M0 3h3M0 5h3M0 7h3M0 9h3" stroke="#222" strokeWidth=".8" /></Icon></HudGrip>
                    <Icon w={13} h={12}><path d="M1 10v1M3 9v2M5 8v3M7 6v5M9 4v7M11 2v9" strokeWidth="1.200" /></Icon>
                    <Icon w={18} h={16}><circle cx="10" cy="8" r="6" strokeWidth="1.300" /><path d="M10 2v6" strokeWidth="1.300" /></Icon>
                    <HudGain><Blue>+0</Blue> dB</HudGain>
                    <Divider />
                    <Tool aria-label="Pin heads-up display"><PinIcon /></Tool>
                  </Hud>
                </Lanes>
                <Scales>
                  {["L", "R"].map((ch) => (
                    <Scale key={ch}>
                      <Stretch viewBox="0 0 5 262" preserveAspectRatio="none"><path d={scalePath} stroke="#8a8a8a" /></Stretch>
                      <ScaleLabels>{dbLabels.map((l, i) => <span key={i}>{l}</span>)}</ScaleLabels>
                      <Channel aria-label={`Channel ${ch}`}>{ch}</Channel>
                    </Scale>
                  ))}
                </Scales>
              </Split>
              <ScrollTrack>
                <Grip />
                <Icon w={5} h={3}><path d="M0 3l2.500-3L5 3z" {...solid} /></Icon>
              </ScrollTrack>
              <Transport>
                <Clock>0:10.754</Clock>
                <ButtonRow>
                  {transport.map(([n, i, dim]) => <IconButton key={n} aria-label={n} $dim={dim}>{i}</IconButton>)}
                </ButtonRow>
                <ButtonRow>
                  {zooms.map(([n, i, dim]) => <IconButton key={n} aria-label={n} $dim={dim}>{i}</IconButton>)}
                </ButtonRow>
              </Transport>
            </Editor>
            <Sliver />
          </Upper>

          <Lower>
            <Levels>
              <PanelTitle>Levels<Burger /></PanelTitle>
              <Meter><span /><Clip /></Meter>
              <MeterTicks viewBox="0 0 1206 4" preserveAspectRatio="none"><path d={meterPath} stroke="#999" /></MeterTicks>
              <MeterLabels>
                {Array.from({ length: 61 }, (_, i) => <span key={i}>{i === 0 ? "dB" : i - 60}</span>)}
              </MeterLabels>
            </Levels>
            <Selection>
              <PanelTitle>Selection/View<Burger /></PanelTitle>
              <Times>
                <colgroup><col width="40" /><col width="55" /><col width="54" /><col /></colgroup>
                <thead><tr><th /><th scope="col">Start</th><th scope="col">End</th><th scope="col">Duration</th></tr></thead>
                <tbody>
                  {times.map(([label, ...v]) => (
                    <tr key={label}>
                      <th scope="row">{label}</th>
                      {v.map((t, i) => <td key={i}><Blue>{t}</Blue></td>)}
                    </tr>
                  ))}
                </tbody>
              </Times>
            </Selection>
          </Lower>
        </Work>
      </Dock>
    </App_>
  );
}
